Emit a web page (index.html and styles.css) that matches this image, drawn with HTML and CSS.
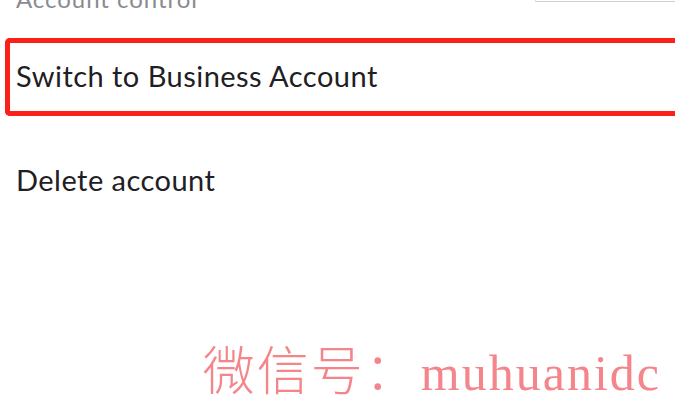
FILE: index.html
```html
<!DOCTYPE html>
<html lang="en">
<head>
<meta charset="utf-8">
<title>Account control</title>
<link rel="stylesheet" href="styles.css">
</head>
<body>
<div class="page">
  <div class="section-head">
    <span class="section-title">Account control</span>
    <span class="field"></span>
  </div>
  <div class="row highlighted">Switch to Business Account</div>
  <div class="row plain">Delete account</div>
  <div class="watermark"><span class="wm-cjk">微信号：</span><span class="wm-latin">muhuanidc</span></div>
</div>
</body>
</html>
```
FILE: styles.css
```css
html, body { margin: 0; padding: 0; background: #fff; }
.page { width: 675px; height: 410px; overflow: hidden; display: flex; flex-direction: column; font-family: Lato, "Open Sans", sans-serif; color: #1f2024; }
.section-head { height: 38px; flex: none; padding-left: 16px; display: flex; justify-content: space-between; align-items: flex-end; }
.section-title { align-self: flex-start; margin-top: -15px; font-size: 24px; line-height: 28px; letter-spacing: 0.95px; color: #8a8b91; }
.field { align-self: flex-start; width: 140px; height: 2px; box-sizing: border-box; border-bottom: 1px solid #cfcfcf; border-left: 1px solid #e0e0e0; }
.row { flex: none; font-size: 29px; line-height: 36px; letter-spacing: 0.47px; padding-left: 16px; }
.highlighted { height: 78px; box-sizing: border-box; margin-left: 5px; padding-left: 6px; padding-bottom: 3px; border: 5.5px solid #fb2018; border-right: 0; border-radius: 5px 0 0 5px; display: flex; align-items: center; }
.plain { margin-top: 46px; }
.watermark { margin-top: auto; padding: 0 14px 9px 0; align-self: flex-end; display: flex; align-items: baseline; line-height: 56px; color: #f4858a; }
.wm-cjk { font-family: "Noto Sans CJK SC", sans-serif; font-weight: 300; font-size: 52px; letter-spacing: 2px; margin-right: 2px; }
.wm-latin { font-family: "Liberation Serif", serif; font-size: 50px; letter-spacing: 2px; }
```
